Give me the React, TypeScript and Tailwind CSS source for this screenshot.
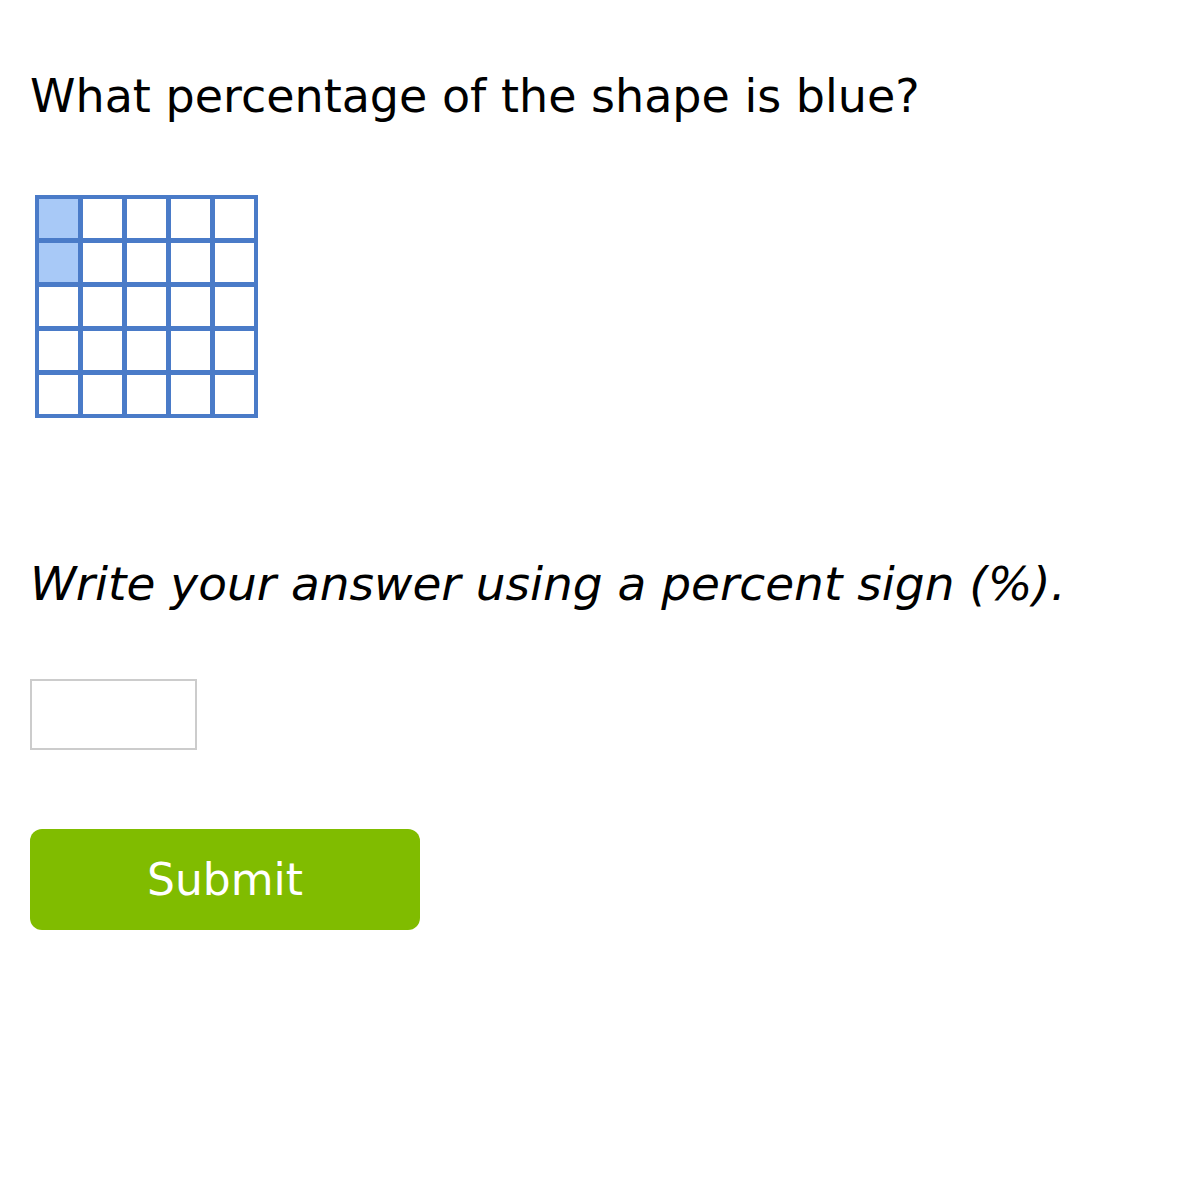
import { useState } from 'react';

const ROWS = 5;
const COLS = 5;
const BLUE_CELLS = [0, 5];

function GridShape() {
  return (
    <div className="grid w-fit grid-cols-5 gap-[5px] border-[4px] border-[#4a7bc8] bg-[#4a7bc8]">
      {Array.from({ length: ROWS * COLS }).map((_, i) => (
        <div
          key={i}
          className={`h-[39px] w-[39px] ${BLUE_CELLS.includes(i) ? 'bg-[#a8c9f7]' : 'bg-white'}`}
        />
      ))}
    </div>
  );
}

export default function App() {
  const [answer, setAnswer] = useState('');

  return (
    <div className="min-h-[1200px] bg-white px-[30px] text-black [font-family:'DejaVu_Sans',Verdana,sans-serif]">
      {/* Question */}
      <p className="pt-[66px] text-[46px] leading-[60px]">What percentage of the shape is blue?</p>

      <div className="mt-[69px] pl-[5px]">
        <GridShape />
      </div>

      {/* Instructions */}
      <p className="mt-[136px] text-[47px] italic leading-[60px]">Write your answer using a percent sign (%).</p>

      <input
        value={answer}
        onChange={e => setAnswer(e.target.value)}
        className="mt-[65px] block h-[71px] w-[167px] border-2 border-[#cccccc] px-2 text-[40px] outline-none"
      />

      <button className="mt-[79px] block h-[101px] w-[390px] rounded-[12px] bg-[#80bc00] text-[44px] text-white">
        Submit
      </button>
    </div>
  );
}
